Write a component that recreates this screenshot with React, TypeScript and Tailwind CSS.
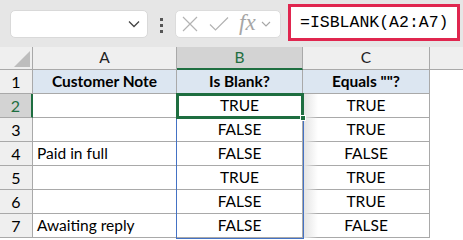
import React from "react";

const rows: { n: number; a: string; b: string; c: string }[] = [
  { n: 2, a: "", b: "TRUE", c: "TRUE" },
  { n: 3, a: "", b: "FALSE", c: "TRUE" },
  { n: 4, a: "Paid in full", b: "FALSE", c: "FALSE" },
  { n: 5, a: "", b: "TRUE", c: "TRUE" },
  { n: 6, a: "", b: "FALSE", c: "TRUE" },
  { n: 7, a: "Awaiting reply", b: "FALSE", c: "FALSE" },
];

const cell = "border-r border-b border-[#a9a9a9] h-[24px] flex items-center";

export default function App() {
  return (
    <div className="w-[463px] h-[240px] overflow-hidden bg-white text-black font-['Lato',sans-serif]">
      {/* formula bar */}
      <div className="h-[47px] bg-[#e6e6e6] flex items-start pl-[10px]">
        <div className="mt-[10px] w-[138px] h-[28px] bg-white rounded-[5px] border border-[#d9d9d9] flex items-center justify-end pr-[7px]">
          <svg width="12" height="8" viewBox="0 0 12 8">
            <path d="M1 1.5 L6 6.5 L11 1.5" fill="none" stroke="#444" strokeWidth="1.3" />
          </svg>
        </div>
        <div className="mt-[18px] ml-[12px] flex flex-col gap-[3px]">
          <span className="w-[3px] h-[3px] bg-[#555]" />
          <span className="w-[3px] h-[3px] bg-[#555]" />
          <span className="w-[3px] h-[3px] bg-[#555]" />
        </div>
        <div className="mt-[10px] ml-[12px] w-[106px] h-[28px] bg-white rounded-[5px] border border-[#dcdcdc] flex items-center pl-[6px]">
          <svg width="16" height="16" viewBox="0 0 16 16">
            <path d="M1 1 L15 15 M15 1 L1 15" stroke="#b3b3b3" strokeWidth="1.2" />
          </svg>
          <svg width="20" height="16" viewBox="0 0 20 16" className="ml-[11px]">
            <path d="M1 8.5 L6.5 14 L19 1.5" fill="none" stroke="#b3b3b3" strokeWidth="1.2" />
          </svg>
          <span className="ml-[10px] font-['Liberation_Serif',serif] italic text-[23px] leading-none text-[#a6a6a6] -mt-[4px]">
            fx
          </span>
          <svg width="10" height="6" viewBox="0 0 10 6" className="ml-[5px]">
            <path d="M1 1 L5 5 L9 1" fill="none" stroke="#a6a6a6" strokeWidth="1.1" />
          </svg>
        </div>
        <div className="mt-[4px] ml-[7px] w-[172px] h-[37px] bg-white border-[3px] border-[#e0264f] flex items-center pl-[9px]">
          <span className="font-['Liberation_Mono',monospace] text-[16.5px] leading-none mt-[1px]">
            =ISBLANK(A2:A7)
          </span>
        </div>
      </div>

      {/* grid */}
      <div className="relative">
        <div className="grid grid-cols-[33px_144px_126px_127px_1fr] text-[15.5px]">
          {/* column headers */}
          <div className="h-[23px] bg-[#efefef] border-r border-b border-[#a9a9a9] flex items-end justify-end p-[2px]">
            <svg width="16" height="16" viewBox="0 0 16 16">
              <path d="M16 0 L16 16 L0 16 Z" fill="#bdbdbd" />
            </svg>
          </div>
          <div className="h-[23px] bg-[#efefef] border-r border-b border-[#a9a9a9] flex items-center justify-center text-[#222]">
            A
          </div>
          <div className="h-[23px] bg-[#d3d3d3] border-r border-[#a9a9a9] border-b-2 border-b-[#1e6e40] flex items-center justify-center text-[#1e6e40]">
            B
          </div>
          <div className="h-[23px] bg-[#efefef] border-r border-b border-[#a9a9a9] flex items-center justify-center text-[#222]">
            C
          </div>
          <div className="h-[23px] bg-[#efefef] border-b border-[#a9a9a9]" />

          {/* row 1 */}
          <div className={`${cell} bg-[#efefef] justify-center text-[16px]`}>1</div>
          <div className={`${cell} bg-[#dce6f1] justify-center font-bold`}>Customer Note</div>
          <div className={`${cell} bg-[#dce6f1] justify-center font-bold`}>Is Blank?</div>
          <div className={`${cell} bg-[#dce6f1] justify-center font-bold`}>Equals ""?</div>
          <div className="h-[24px]" />

          {rows.map((r) => (
            <React.Fragment key={r.n}>
              <div
                className={
                  r.n === 2
                    ? "h-[24px] bg-[#d3d3d3] border-b border-[#a9a9a9] border-r-2 border-r-[#1e6e40] flex items-center justify-center text-[16px] text-[#1e6e40]"
                    : `${cell} bg-[#efefef] justify-center text-[16px]`
                }
              >
                {r.n}
              </div>
              <div className={`${cell} pl-[4px]`}>{r.a}</div>
              <div className={`${cell} justify-center`}>{r.b}</div>
              <div className={`${cell} justify-center`}>{r.c}</div>
              <div className="h-[24px]" />
            </React.Fragment>
          ))}
        </div>

        {/* range shadow */}
        <div className="absolute left-[304px] top-[47px] w-[14px] h-[144px] bg-gradient-to-r from-[#e4e4e4] to-transparent" />
        {/* selected range */}
        <div className="absolute left-[176px] top-[46px] w-[128px] h-[146px] border-[1.5px] border-[#4472c4]" />
        {/* active cell */}
        <div className="absolute left-[176px] top-[46px] w-[128px] h-[26px] border-[3px] border-[#1e6e40]" />
        <div className="absolute left-[300px] top-[68px] w-[6px] h-[6px] bg-[#1e6e40] border border-white" />
      </div>
    </div>
  );
}
